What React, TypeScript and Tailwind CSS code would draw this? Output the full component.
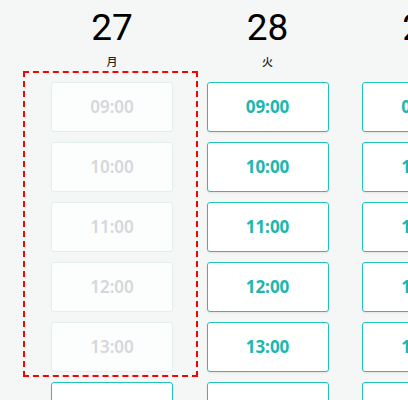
import React from "react";

const days = [
  { d: "27", w: "月", disabled: true },
  { d: "28", w: "火", disabled: false },
  { d: "29", w: "水", disabled: false },
];
const times = ["09:00", "10:00", "11:00", "12:00", "13:00", "14:00"];

export default function App() {
  return (
    <div
      className="w-[408px] h-[400px] overflow-hidden bg-[#f5f7f7]"
      style={{ fontFamily: '"Noto Sans", "Noto Sans CJK JP", sans-serif' }}
    >
      <div className="flex gap-[33.5px] pl-[51px]">
        {days.map((day) => (
          <div key={day.d} className="w-[122px] shrink-0 flex flex-col items-center">
            <div className="mt-[10px] h-[36px] leading-[36px] text-[37px] text-black" style={{ fontFamily: "Roboto, sans-serif" }}>
              {day.d}
            </div>
            <div className="mt-[7px] h-[16px] leading-[16px] text-[11px] font-medium text-[#222]" style={{ fontFamily: '"Noto Sans CJK JP", sans-serif' }}>
              {day.w}
            </div>
            <div className="relative mt-[13px] w-full flex flex-col gap-[10px]">
              {times.map((t, i) => {
                const dis = day.disabled && i < 5;
                return (
                  <div
                    key={t}
                    className={
                      dis
                        ? "h-[50px] w-full rounded-[3px] border border-[#e5eeee] bg-[#fcfdfd] flex items-center justify-center text-[17px] font-semibold text-[#d4d8dc]"
                        : "h-[50px] w-full rounded-[3px] border border-[#1fc3bc] bg-white shadow-[0_1px_2px_rgba(0,0,0,0.08)] flex items-center justify-center text-[17px] font-bold text-[#1cb7b1]"
                    }
                  >
                    {t}
                  </div>
                );
              })}
              {day.disabled && (
                <div className="absolute left-[-28px] right-[-25px] top-[-11px] h-[306px] border-2 border-dashed border-[#ff0000] pointer-events-none" />
              )}
            </div>
          </div>
        ))}
      </div>
    </div>
  );
}
